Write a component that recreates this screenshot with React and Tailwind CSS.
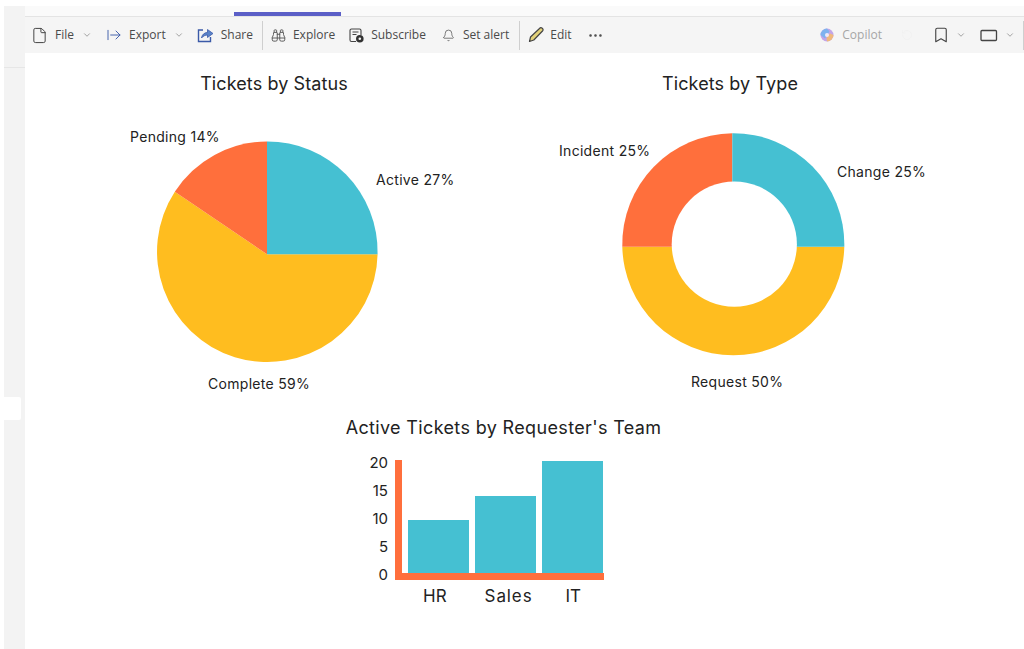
import React from "react";
import { File, ChevronDown, ArrowRightFromLine, Binoculars, Bell, Ellipsis, Bookmark, RotateCcw } from "lucide-react";

const sans = "font-['Open_Sans','Liberation_Sans',sans-serif]";
const chartFont = "font-['Inter','Liberation_Sans',sans-serif]";

function Label({ x, y, children }) {
  return (
    <text x={x} y={y} fill="#222222" className="text-[14px] font-normal tracking-[0.3px]">
      {children}
    </text>
  );
}

function Chevron({ className }) {
  return <ChevronDown size={10} strokeWidth={1.7} className={`shrink-0 text-[#808080] ${className}`} />;
}

export default function App() {
  return (
    <div className={`flex h-[649px] w-[1024px] overflow-hidden bg-white pl-[4px] pt-[6px] ${sans}`}>
      <aside className="flex h-[643px] w-[21px] shrink-0 flex-col bg-[#f3f3f3]">
        <div className="h-[62px] shrink-0 border-b border-[#e6e6e6]" />
        <div className="h-[329px] shrink-0" />
        <div className="h-[23px] w-[17px] shrink-0 rounded-r-[2px] bg-white" />
      </aside>

      <main className="flex min-w-0 flex-1 flex-col">
        <div className="flex h-[11px] shrink-0 items-end border-b border-[#e4e4e4] bg-[#fafafa]">
          <div className="ml-[209px] h-[4px] w-[107px] bg-[#5b5fc7]" />
        </div>

        <div className="flex h-[36px] shrink-0 items-center whitespace-nowrap bg-[#f5f5f5] text-[12px] text-[#4a4a4a]">
          <File size={17} strokeWidth={1.4} className="ml-[6px] shrink-0 text-[#444444]" />
          <span className="ml-[7px]">File</span>
          <Chevron className="ml-[8px]" />
          <ArrowRightFromLine size={16} strokeWidth={1.4} className="ml-[14px] shrink-0 text-[#3b5aa8]" />
          <span className="ml-[7px]">Export</span>
          <Chevron className="ml-[8px]" />
          <svg width="17" height="16" viewBox="0 0 17 16" fill="none" className="ml-[13px] shrink-0">
            <path d="M6 3H1.5v11.5h12V10" stroke="#3b5aa8" strokeWidth="1.4" />
            <path d="M4.5 11C5 7.5 7.5 5.5 10.5 5.5V2.5L16 6.5l-5.5 4V8C8.5 8 6 9 4.5 11Z" fill="#5b84c9" stroke="#3b5aa8" strokeWidth="0.8" />
          </svg>
          <span className="ml-[7px]">Share</span>
          <div className="ml-[9px] h-[29px] w-px shrink-0 bg-[#cfcfcf]" />
          <Binoculars size={15} strokeWidth={1.5} className="ml-[8px] shrink-0 text-[#555555]" />
          <span className="ml-[7px]">Explore</span>
          <svg width="15" height="15" viewBox="0 0 15 15" fill="none" className="ml-[14px] shrink-0">
            <path d="M7 13.5H2.5a1.5 1.5 0 0 1-1.5-1.5V2.5A1.5 1.5 0 0 1 2.5 1h8A1.5 1.5 0 0 1 12 2.5V7" stroke="#444444" strokeWidth="1.1" />
            <path d="M3.5 4h6M3.5 6.5h4" stroke="#444444" strokeWidth="1.1" />
            <circle cx="10.8" cy="10.8" r="3.8" fill="#333333" />
            <circle cx="10.8" cy="10.8" r="1.3" fill="#f5f5f5" />
          </svg>
          <span className="ml-[7px]">Subscribe</span>
          <Bell size={13} strokeWidth={1.4} className="ml-[16px] shrink-0 text-[#555555]" />
          <span className="ml-[8px]">Set alert</span>
          <div className="ml-[10px] h-[29px] w-px shrink-0 bg-[#cfcfcf]" />
          <svg width="16" height="16" viewBox="0 0 16 16" fill="none" className="ml-[8px] shrink-0">
            <path d="M1.5 14.5l1-4.5L11.5 1.5a1.6 1.6 0 0 1 3 2.5L5.8 13 1.5 14.5Z" fill="#e3d27a" stroke="#444444" strokeWidth="1.2" strokeLinejoin="round" />
          </svg>
          <span className="ml-[6px]">Edit</span>
          <Ellipsis size={17} strokeWidth={1.6} className="ml-[15px] shrink-0 text-[#444444]" />

          <div className="ml-auto flex items-center">
            <svg width="14" height="14" viewBox="0 0 14 14" className="shrink-0">
              <circle cx="7" cy="7" r="6.5" fill="#c3a5e8" />
              <path d="M.5 7A6.5 6.5 0 0 1 7 .5l2.5 3L5 10.5Z" fill="#7fb2ee" />
              <path d="M7 13.5A6.5 6.5 0 0 0 13.5 7L10 5.5 6.5 10Z" fill="#f0b87c" />
              <circle cx="7" cy="7" r="2" fill="#efe8f6" />
            </svg>
            <span className="ml-[8px] text-[#a6a6a6]">Copilot</span>
            <RotateCcw size={12} strokeWidth={1.3} className="ml-[19px] shrink-0 text-[#efefef]" />
            <Bookmark size={18} strokeWidth={1.5} className="ml-[19px] shrink-0 text-[#444444]" />
            <Chevron className="ml-[6px]" />
            <svg width="18" height="13" viewBox="0 0 18 13" fill="none" className="ml-[14px] shrink-0">
              <rect x="1" y="1.5" width="15.5" height="10" rx="1" stroke="#444444" strokeWidth="1.3" />
            </svg>
            <Chevron className="ml-[7px]" />
            <div className="ml-[8px] h-[29px] w-px shrink-0 bg-[#cfcfcf]" />
          </div>
        </div>

        <div className={`flex flex-1 flex-col bg-white text-[#222222] ${chartFont}`}>
          <div className="flex">
            <section className="flex w-[498px] shrink-0 flex-col">
              <h2 className="mt-[20px] h-[21px] text-center text-[18px] font-normal leading-[21px] tracking-[0.1px]">Tickets by Status</h2>
              <svg width="498" height="300" viewBox="25 94 498 300" className="block">
                <path d="M267 254.3 L377.6 254.3 A110.3 110.3 0 1 1 174.8 191.7 Z" fill="#ffbd1f" />
                <path d="M267 254.3 L174.8 191.7 A110.3 110.3 0 0 1 267 141.5 Z" fill="#ff6f3c" />
                <path d="M267 254.3 L267 141.5 A110.3 110.3 0 0 1 377.6 254.3 Z" fill="#45c0d2" />
                <Label x={130} y={142}>Pending 14%</Label>
                <Label x={376} y={185}>Active 27%</Label>
                <Label x={208} y={389}>Complete 59%</Label>
              </svg>
            </section>
            <section className="flex min-w-0 flex-1 flex-col">
              <h2 className="mt-[20px] h-[21px] w-[414px] text-center text-[18px] font-normal leading-[21px] tracking-[0.1px]">Tickets by Type</h2>
              <svg width="501" height="300" viewBox="523 94 501 300" className="block">
                <path d="M732.3 246.7 L844.3 246.7 A111 111 0 0 1 733.3 355.3 A111 111 0 0 1 622.3 246.7 Z" fill="#ffbd1f" />
                <path d="M732.3 246.7 L622.3 246.7 A111 111 0 0 1 732.3 133.3 Z" fill="#ff6f3c" />
                <path d="M732.3 246.7 L732.3 133.3 A111 111 0 0 1 844.3 246.7 Z" fill="#45c0d2" />
                <circle cx="734.3" cy="244.2" r="62.6" fill="#ffffff" />
                <Label x={559} y={156}>Incident 25%</Label>
                <Label x={837} y={177}>Change 25%</Label>
                <Label x={691} y={387}>Request 50%</Label>
              </svg>
            </section>
          </div>

          <section className="ml-[320px] mt-[22px] flex w-[317px] flex-col">
            <h2 className="h-[24px] whitespace-nowrap text-center text-[18px] font-normal leading-[24px] tracking-[0.35px]">Active Tickets by Requester's Team</h2>
            <div className="mt-[13px] flex">
              <div className="flex h-[132px] w-[43px] flex-col items-end justify-between text-[15px] leading-[20px]">
                <span>20</span>
                <span>15</span>
                <span>10</span>
                <span>5</span>
                <span>0</span>
              </div>
              <div className="ml-[7px] mt-[7px] flex flex-col">
                <div className="flex h-[120px] w-[209px] items-end gap-[6px] border-b-[7px] border-l-[7px] border-[#ff6f3c] pl-[6px]">
                  <div className="h-[53px] w-[61px] bg-[#45c0d2]" />
                  <div className="h-[77px] w-[61px] bg-[#45c0d2]" />
                  <div className="h-[112px] w-[61px] bg-[#45c0d2]" />
                </div>
                <div className="mt-[5px] flex h-[22px] items-center text-[17px] leading-[22px]">
                  <span className="ml-[28px]">HR</span>
                  <span className="ml-[38px] tracking-[0.9px]">Sales</span>
                  <span className="ml-[33px]">IT</span>
                </div>
              </div>
            </div>
          </section>
        </div>
      </main>
    </div>
  );
}
